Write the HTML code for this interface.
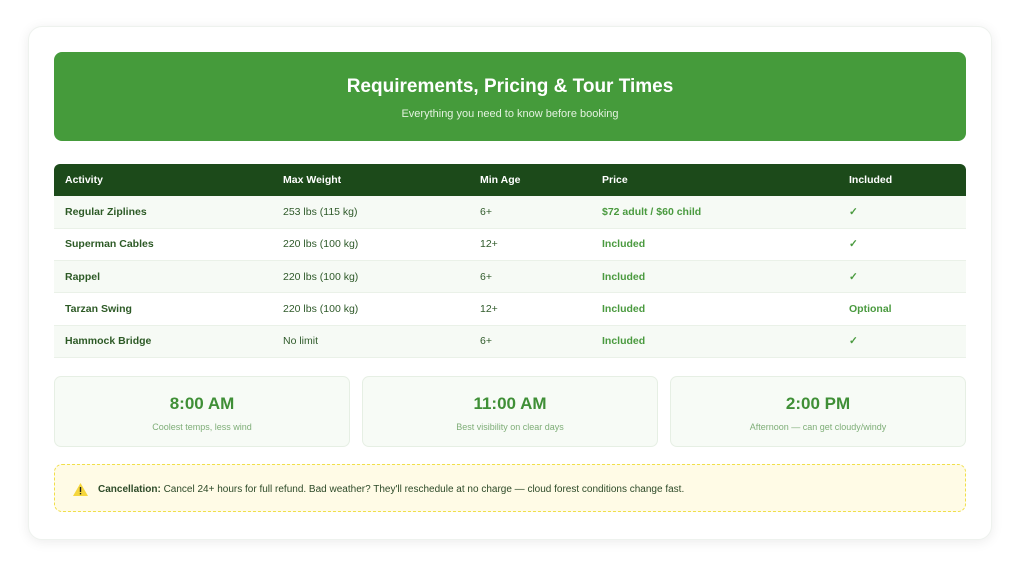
<!DOCTYPE html>
<html><head><meta charset="utf-8"><style>
*{box-sizing:border-box;margin:0;padding:0}
body{width:1024px;height:568px;background:#fff;font-family:"Liberation Sans",sans-serif;position:relative;overflow:hidden}
.card{position:absolute;left:28px;top:26px;width:964px;height:514px;border-radius:14px;background:#fff;box-shadow:0 2px 12px rgba(0,0,0,.08);border:1px solid #eef2ee}
.hdr{position:absolute;left:54px;top:52px;width:912px;height:89px;border-radius:8px;background:#459b3b;color:#fff;text-align:center}
.hdr h1{font-size:19px;font-weight:bold;margin-top:24px}
.hdr p{font-size:11px;margin-top:10px;color:#e3f2df}
table{position:absolute;left:54px;top:164px;width:912px;border-collapse:collapse;font-size:10.5px}
th{background:#1c4a1a;color:#fff;text-align:left;font-weight:bold;height:32px;padding-left:11px}
thead tr th:first-child{border-top-left-radius:6px}thead tr th:last-child{border-top-right-radius:6px}
td{height:32.3px;padding-left:11px;color:#2f5a2a;border-bottom:1px solid #eaf1e8}
tbody tr:nth-child(odd){background:#f6faf5}
td.a{font-weight:bold;color:#2d5a26}
td.g{color:#4a9a3f;font-weight:bold}
.box{position:absolute;top:376px;width:296px;height:71px;border:1px solid #e6efe4;border-radius:7px;background:#f7fbf6;text-align:center}
.box b{display:block;font-size:17px;color:#3f8f36;margin-top:17px}
.box span{display:block;font-size:9px;color:#7fae78;margin-top:8px}
.note{position:absolute;left:54px;top:464px;width:912px;height:48px;border:1.5px dashed #f0df4a;border-radius:8px;background:#fffbe6;font-size:10px;color:#2d4a28;padding:19px 0 0 43px}
.note svg{position:absolute;left:17px;top:17px}
</style></head><body>
<div class="card"></div>
<div class="hdr"><h1>Requirements, Pricing &amp; Tour Times</h1><p>Everything you need to know before booking</p></div>
<table>
<colgroup><col style="width:218px"><col style="width:197px"><col style="width:122px"><col style="width:247px"><col></colgroup>
<thead><tr><th>Activity</th><th>Max Weight</th><th>Min Age</th><th>Price</th><th>Included</th></tr></thead>
<tbody>
<tr><td class="a">Regular Ziplines</td><td>253 lbs (115 kg)</td><td>6+</td><td class="g">$72 adult / $60 child</td><td class="g">✓</td></tr>
<tr><td class="a">Superman Cables</td><td>220 lbs (100 kg)</td><td>12+</td><td class="g">Included</td><td class="g">✓</td></tr>
<tr><td class="a">Rappel</td><td>220 lbs (100 kg)</td><td>6+</td><td class="g">Included</td><td class="g">✓</td></tr>
<tr><td class="a">Tarzan Swing</td><td>220 lbs (100 kg)</td><td>12+</td><td class="g">Included</td><td class="g">Optional</td></tr>
<tr><td class="a">Hammock Bridge</td><td>No limit</td><td>6+</td><td class="g">Included</td><td class="g">✓</td></tr>
</tbody></table>
<div class="box" style="left:54px"><b>8:00 AM</b><span>Coolest temps, less wind</span></div>
<div class="box" style="left:362px"><b>11:00 AM</b><span>Best visibility on clear days</span></div>
<div class="box" style="left:670px"><b>2:00 PM</b><span>Afternoon — can get cloudy/windy</span></div>
<div class="note"><svg width="17" height="15" viewBox="0 0 17 15"><path d="M8.5 1L16 14H1Z" fill="#f5d63d"/><rect x="7.8" y="5" width="1.4" height="5" fill="#222"/><rect x="7.8" y="11" width="1.4" height="1.4" fill="#222"/></svg><b>Cancellation:</b> Cancel 24+ hours for full refund. Bad weather? They'll reschedule at no charge — cloud forest conditions change fast.</div>
</body></html>
